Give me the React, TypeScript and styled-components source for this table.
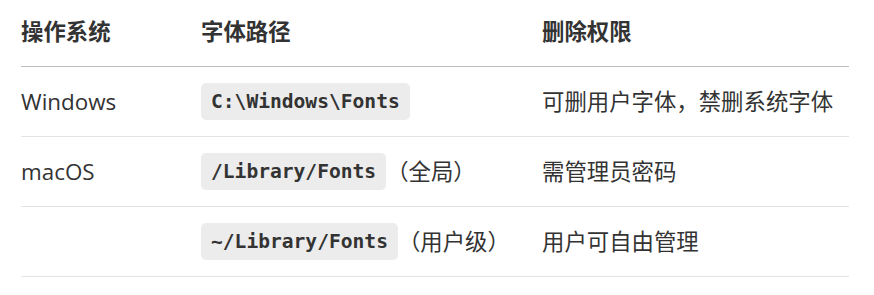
import React from 'react';
import styled, { createGlobalStyle } from 'styled-components';

type Row = {
  os: string;
  path: string;
  note?: string;
  rights: string;
};

const rows: Row[] = [
  { os: 'Windows', path: 'C:\\Windows\\Fonts', rights: '可删用户字体，禁删系统字体' },
  { os: 'macOS', path: '/Library/Fonts', note: '（全局）', rights: '需管理员密码' },
  { os: '', path: '~/Library/Fonts', note: '（用户级）', rights: '用户可自由管理' },
];

export default function App() {
  return (
    <>
      <GlobalStyle />
      <Page>
        <Table>
          <thead>
            <tr>
              <HeadCell $width={180}>操作系统</HeadCell>
              <HeadCell $width={341}>字体路径</HeadCell>
              <HeadCell>删除权限</HeadCell>
            </tr>
          </thead>
          <tbody>
            {rows.map((row) => (
              <tr key={row.path}>
                <Cell>{row.os}</Cell>
                <Cell>
                  <Code>{row.path}</Code>
                  {row.note}
                </Cell>
                <Cell>{row.rights}</Cell>
              </tr>
            ))}
          </tbody>
        </Table>
      </Page>
    </>
  );
}

const GlobalStyle = createGlobalStyle`
  html, body {
    margin: 0;
    padding: 0;
    background: #ffffff;
  }

  body {
    font-family: "Open Sans", "Noto Sans CJK SC", sans-serif;
    color: #333333;
  }
`;

const Page = styled.div`
  padding: 0 25px 0 21px;
`;

const Table = styled.table`
  width: 100%;
  border-collapse: separate;
  border-spacing: 0;
  font-size: 22.4px;
  table-layout: fixed;
`;

const HeadCell = styled.th<{ $width?: number }>`
  width: ${(p) => (p.$width ? `${p.$width}px` : 'auto')};
  padding: 15px 0 18px;
  line-height: 33px;
  text-align: left;
  font-weight: 700;
  border-bottom: 1px solid #bdbdbd;
`;

const Cell = styled.td`
  padding: 16px 0;
  height: 37px;
  line-height: 37px;
  vertical-align: middle;
  white-space: nowrap;
  border-bottom: 1px solid #e3e3e3;
`;

const Code = styled.code`
  display: inline-block;
  vertical-align: top;
  padding: 0 10px;
  border-radius: 5px;
  background: #ececec;
  font-family: "DejaVu Sans Mono", monospace;
  font-weight: 700;
  font-size: 19.6px;
  line-height: 37px;
  color: #333333;
`;
